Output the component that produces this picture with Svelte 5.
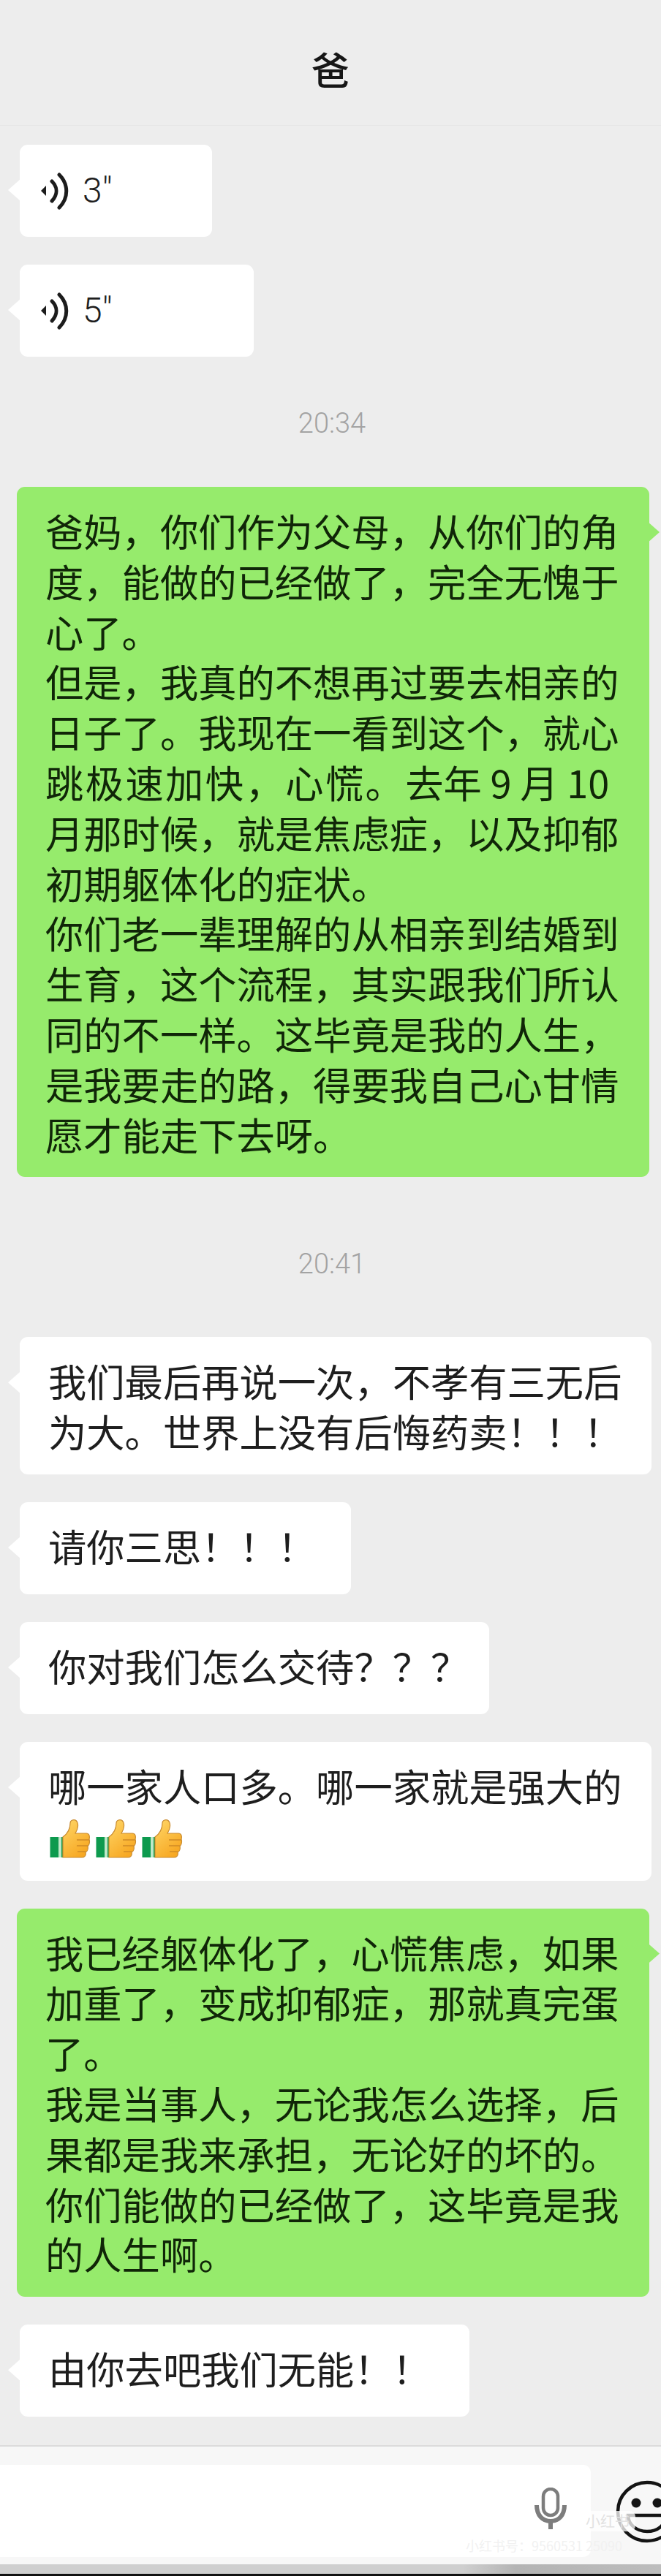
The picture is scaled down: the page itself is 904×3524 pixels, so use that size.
<script>
    const watermarkId = '小红书号：9560531 25090';
</script>

{#snippet voiceIcon()}
    <svg class="voice-icon" viewBox="0 0 40 52" aria-hidden="true">
        <polygon points="2,26 9,19 9,33" fill="#1c1c1c"/>
        <path d="M17 13 C25 21 25 31 17 40" fill="none" stroke="#1c1c1c" stroke-width="5" stroke-linecap="round"/>
        <path d="M27 4 C40 17 40 36 27 49" fill="none" stroke="#1c1c1c" stroke-width="5" stroke-linecap="round"/>
    </svg>
{/snippet}

{#snippet thumb(id)}
    <svg class="thumb" viewBox="0 0 56 53" aria-hidden="true">
        <defs>
            <linearGradient id="hand{id}" x1="0" y1="0" x2="0.6" y2="1">
                <stop offset="0" stop-color="#ffd768"/>
                <stop offset="1" stop-color="#f7a823"/>
            </linearGradient>
        </defs>
        <rect x="0.5" y="24" width="18" height="28" fill="#0d9a4e"/>
        <rect x="12" y="24" width="4" height="28" fill="#bfe8c8"/>
        <path d="M18 24 C25 19 28 12 28 5 C28 1 33 -0.5 36 1.5 C40 5 39 13 35 19 L50 19 C54 19 55 23 54 27 C55 31 54 35 52 37 C53 41 51 44 49 45 C50 49 48 52 44 52 L18 52 Z" fill="url(#hand{id})" stroke="#c98c32" stroke-width="1.2"/>
        <path d="M37 28 L54 28 M37 36 L52 36 M38 44 L49 44" fill="none" stroke="#d08a26" stroke-width="1.4"/>
    </svg>
{/snippet}

<div class="page">
    <header class="topbar">爸</header>

    <main class="messages">
        <div class="bubble left voice w-voice-short">
            {@render voiceIcon()}
            <span class="seconds">3"</span>
        </div>
        <div class="bubble left voice w-voice-long">
            {@render voiceIcon()}
            <span class="seconds">5"</span>
        </div>

        <div class="time first">20:34</div>

        <div class="bubble right">
            爸妈，你们作为父母，从你们的角<br>
            度，能做的已经做了，完全无愧于<br>
            心了。<br>
            但是，我真的不想再过要去相亲的<br>
            日子了。我现在一看到这个，就心<br>
            <span class="wide">跳极速加快，心慌。</span>去年 9 月 10<br>
            月那时候，就是焦虑症，以及抑郁<br>
            初期躯体化的症状。<br>
            你们老一辈理解的从相亲到结婚到<br>
            生育，这个流程，其实跟我们所认<br>
            同的不一样。这毕竟是我的人生，<br>
            是我要走的路，得要我自己心甘情<br>
            愿才能走下去呀。
        </div>

        <div class="time second">20:41</div>

        <div class="bubble left w-full">
            我们最后再说一次，不孝有三无后<br>
            为大。世界上没有后悔药卖！！！
        </div>
        <div class="bubble left w-think">请你三思！！！</div>
        <div class="bubble left w-account">你对我们怎么交待？？？</div>
        <div class="bubble left w-full with-thumbs">
            哪一家人口多。哪一家就是强大的<br>
            <span class="thumbs">{@render thumb(1)}{@render thumb(2)}{@render thumb(3)}</span>
        </div>

        <div class="bubble right">
            我已经躯体化了，心慌焦虑，如果<br>
            加重了，变成抑郁症，那就真完蛋<br>
            了。<br>
            我是当事人，无论我怎么选择，后<br>
            果都是我来承担，无论好的坏的。<br>
            你们能做的已经做了，这毕竟是我<br>
            的人生啊。
        </div>

        <div class="bubble left w-last">由你去吧我们无能！！</div>
    </main>

    <footer class="inputbar">
        <div class="input">
            <svg class="mic" viewBox="0 0 50 60" aria-hidden="true">
                <rect x="15" y="2" width="20" height="36" rx="10" fill="none" stroke="#7d7d7d" stroke-width="4.5"/>
                <path d="M6 24 C6 38 14 46 25 46 C36 46 44 38 44 24" fill="none" stroke="#7d7d7d" stroke-width="6"/>
                <rect x="22" y="46" width="6" height="11" fill="#7d7d7d"/>
            </svg>
        </div>
        <svg class="smile" viewBox="0 0 88 88" aria-hidden="true">
            <circle cx="44" cy="44" r="40" fill="none" stroke="#141414" stroke-width="4.5"/>
            <circle cx="29" cy="32" r="6.5" fill="#141414"/>
            <circle cx="58" cy="32" r="6.5" fill="#141414"/>
            <path d="M18 49 L70 49 C70 62 58 71 44 71 C30 71 18 62 18 49 Z" fill="none" stroke="#141414" stroke-width="4.5"/>
        </svg>
        <div class="badge">小红书</div>
        <div class="watermark">{watermarkId}</div>
    </footer>

    <div class="band"></div>
</div>

<style>
    :global(body) {
        margin: 0;
        background: #ededed;
    }

    .page {
        height: 3524px;
        display: flex;
        flex-direction: column;
        overflow: hidden;
        background: #ededed;
        font-family: "Noto Sans CJK SC", sans-serif;
        color: #1c1c1c;
    }

    .topbar {
        height: 172px;
        flex: none;
        display: flex;
        align-items: center;
        justify-content: center;
        padding-top: 15px;
        box-sizing: border-box;
        border-bottom: 1px solid #e6e6e6;
        font-size: 52px;
        font-weight: 500;
        color: #161616;
    }

    .messages {
        flex: 1;
        display: flex;
        flex-direction: column;
        gap: 38px;
        padding-top: 26px;
    }

    .bubble {
        position: relative;
        box-sizing: border-box;
        min-height: 126px;
        padding: 25px 0 25px 39px;
        border-radius: 11px;
        font-size: 52.3px;
        line-height: 68.8px;
        white-space: nowrap;
    }

    .with-thumbs {
        padding-bottom: 27px;
    }

    .left {
        margin-left: 27px;
        background: #fff;
        color: #1e1e1e;
    }

    .right {
        margin-left: 23px;
        width: 865px;
        background: #96eb6c;
        color: #102608;
    }

    .left::before,
    .right::before {
        content: "";
        position: absolute;
        top: 47px;
        width: 17px;
        height: 30px;
        background: inherit;
    }

    .left::before {
        left: -16px;
        clip-path: polygon(100% 0, 0 50%, 100% 100%);
    }

    .right::before {
        right: -14px;
        clip-path: polygon(0 0, 100% 50%, 0 100%);
    }

    .w-voice-short { width: 263px; }
    .w-voice-long { width: 320px; }
    .w-full { width: 864px; }
    .w-think { width: 453px; }
    .w-account { width: 642px; }
    .w-last { width: 615px; }

    .voice {
        display: flex;
        align-items: center;
        gap: 19px;
        padding: 0 0 0 27px;
        height: 125px;
    }

    .voice-icon {
        width: 40px;
        height: 52px;
        flex: none;
    }

    .seconds {
        font-family: Roboto, sans-serif;
        font-weight: 300;
        font-size: 48px;
        line-height: 1;
    }

    .time {
        text-align: center;
        font-family: Roboto, sans-serif;
        font-weight: 300;
        font-size: 38px;
        line-height: 44px;
        color: #a3a3a3;
    }

    .first {
        margin: 31px 0 27px;
        padding-left: 4px;
    }

    .second {
        margin: 59px 0 40px;
        padding-left: 4px;
    }

    .wide {
        letter-spacing: 2.4px;
    }

    .thumbs {
        display: inline-flex;
        gap: 7px;
        margin-left: 2px;
        vertical-align: -8px;
    }

    .thumb {
        width: 56px;
        height: 53px;
        display: block;
    }

    .inputbar {
        position: relative;
        flex: none;
        height: 163px;
        box-sizing: border-box;
        border-top: 2px solid #dcdcdc;
        padding-top: 25px;
        background: #f7f7f7;
    }

    .input {
        width: 808px;
        height: 126px;
        display: flex;
        align-items: center;
        justify-content: flex-end;
        box-sizing: border-box;
        padding: 0 30px 4px 0;
        border-radius: 0 10px 10px 0;
        background: #fff;
    }

    .mic {
        width: 50px;
        height: 60px;
    }

    .smile {
        position: absolute;
        left: 841px;
        top: 45px;
        width: 88px;
        height: 88px;
    }

    .badge {
        position: absolute;
        left: 793px;
        top: 88px;
        padding: 0 8px;
        height: 28px;
        line-height: 28px;
        border-radius: 8px;
        background: rgba(255, 255, 255, 0.75);
        font-size: 20px;
        color: #e2e2e2;
    }

    .watermark {
        position: absolute;
        left: 637px;
        top: 120px;
        font-size: 18px;
        line-height: 30px;
        white-space: nowrap;
        color: #f1f1f1;
    }

    .band {
        flex: none;
        height: 16px;
        box-sizing: border-box;
        border-bottom: 3px solid #111;
        background: linear-gradient(90deg, #cfcfcf 0, #cfcfcf 70%, #b4b4b4 78%, #bdbdbd 100%);
    }
</style>
